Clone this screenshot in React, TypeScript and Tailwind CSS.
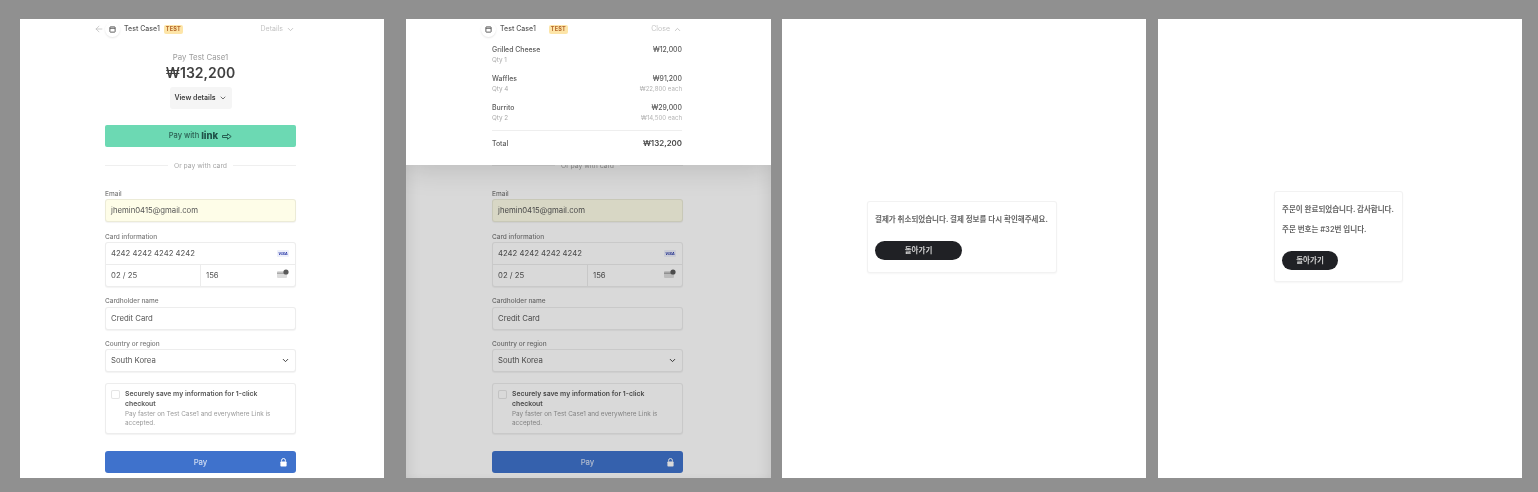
import React from "react";
import { ArrowLeft, ChevronDown, ChevronUp } from "lucide-react";

const font = { fontFamily: '"Inter", "Noto Sans CJK KR", sans-serif' };

function Shop() {
  return (
    <div className="w-[15px] h-[15px] rounded-full bg-white shadow-[0_1px_2px_rgba(0,0,0,0.1)] flex items-center justify-center">
      <svg width="7" height="7" viewBox="0 0 8 8" fill="none">
        <rect x="1" y="1" width="6" height="6" rx="0.6" stroke="#4b4b4b" strokeWidth="1" />
        <path d="M1 2.6H7" stroke="#4b4b4b" strokeWidth="1" />
      </svg>
    </div>
  );
}

function Badge() {
  return (
    <span className="w-[19px] h-[9px] rounded-[2px] bg-[#fde5a8] text-[#b4662a] text-[5.5px] font-bold flex items-center justify-center tracking-[0.2px]">
      TEST
    </span>
  );
}

function Label({ children, top }: { children: React.ReactNode; top: string }) {
  return <div className={`${top} h-[9px] text-[6.5px] leading-[10px] font-medium text-[#7a7a7a]`}>{children}</div>;
}

function Input({ value, bg = "bg-white", children }: { value: string; bg?: string; children?: React.ReactNode }) {
  return (
    <div className={`mt-[1px] h-[23px] rounded-[3px] ${bg} border border-black/[0.07] shadow-[0_1px_1px_rgba(0,0,0,0.05)] px-[5px] flex items-center justify-between text-[7.75px] text-[#555555]`}>
      <span>{value}</span>
      {children}
    </div>
  );
}

function Form() {
  return (
    <div className="w-[191px] flex flex-col shrink-0">
      <div className="flex flex-col items-center mt-[33px]">
        <div className="h-[10px] text-[7.8px] leading-[10px] text-[#9a9a9a]">Pay Test Case1</div>
        <div className="mt-[1px] h-[19px] text-[14px] leading-[19px] font-semibold text-[#404040]">₩132,200</div>
        <div className="mt-[5px] w-[62px] h-[22px] rounded-[3px] bg-[#f5f5f5] flex items-center justify-center gap-[3px] text-[7px] font-semibold text-[#404040]">
          View details
          <ChevronDown size={8} strokeWidth={2.2} />
        </div>
      </div>
      <div className="mt-[16px] h-[22px] rounded-[2px] bg-[#6cd9b3] flex items-center justify-center gap-[2px] text-[7.5px] text-[#2c5f53]">
        <span className="font-medium">Pay with</span>
        <span className="font-extrabold text-[9.5px] leading-[10px] text-[#1f5248]">link</span>
        <svg width="10" height="7" viewBox="0 0 10 7" fill="none" className="ml-[2px]">
          <path d="M0.5 2.5H5.5V0.8L9.2 3.5L5.5 6.2V4.5H0.5Z" stroke="#1f5248" strokeWidth="0.9" strokeLinejoin="round" />
        </svg>
      </div>
      <div className="mt-[13px] h-[10px] flex items-center gap-[6px] text-[6.8px] leading-[12px] text-[#a5a5a5]">
        <div className="flex-1 h-px bg-[#efefef]" />
        <span className="translate-y-[1px]">Or pay with card</span>
        <div className="flex-1 h-px bg-[#efefef]" />
      </div>
      <Label top="mt-[19px]">Email</Label>
      <Input value="jhemin0415@gmail.com" bg="bg-[#fefde8]" />
      <Label top="mt-[10px]">Card information</Label>
      <div className="mt-[1px] h-[45px] rounded-[3px] bg-white border border-black/[0.07] shadow-[0_1px_1px_rgba(0,0,0,0.05)] flex flex-col text-[7.75px] text-[#555555]">
        <div className="h-[22px] border-b border-[#ececec] pl-[5px] pr-[6px] flex items-center justify-between">
          <span>4242 4242 4242 4242</span>
          <span className="w-[12px] h-[7px] rounded-[1px] bg-[#eef0fb] text-[#2a3aa8] text-[4px] font-bold italic flex items-center justify-center">VISA</span>
        </div>
        <div className="flex-1 flex">
          <div className="w-[95px] border-r border-[#ececec] px-[5px] flex items-center">02 / 25</div>
          <div className="flex-1 pl-[5px] pr-[6px] flex items-center justify-between">
            <span>156</span>
            <svg width="12" height="9" viewBox="0 0 12 9" className="mb-[4px]">
              <rect x="0" y="2" width="10" height="7" rx="1" fill="#dcdcdc" />
              <rect x="0" y="3.5" width="10" height="1.4" fill="#a5a5a5" />
              <circle cx="9" cy="3" r="2.6" fill="#5a5a5a" />
            </svg>
          </div>
        </div>
      </div>
      <Label top="mt-[9px]">Cardholder name</Label>
      <div className="mt-[1px]"><Input value="Credit Card" /></div>
      <Label top="mt-[9px]">Country or region</Label>
      <Input value="South Korea">
        <ChevronDown size={9} strokeWidth={2.6} className="text-[#3c3c3c]" />
      </Input>
      <div className="mt-[11px] h-[51px] rounded-[3px] bg-white border border-black/[0.07] shadow-[0_1px_1px_rgba(0,0,0,0.05)] pl-[5px] pr-[8px] pt-[5px] flex gap-[5px]">
        <div className="w-[9px] h-[9px] mt-[1px] rounded-[2px] bg-white border border-black/10 shrink-0" />
        <div className="flex flex-col">
          <div className="text-[6.85px] leading-[9.5px] font-semibold text-[#555555]">Securely save my information for 1-click checkout</div>
          <div className="mt-[2px] text-[6.4px] leading-[9px] text-[#9a9a9a]">Pay faster on Test Case1 and everywhere Link is accepted.</div>
        </div>
      </div>
      <div className="mt-[17px] h-[22px] rounded-[3px] bg-[#3f72cc] text-white/75 text-[7.75px] leading-[24px] font-medium flex items-center justify-center relative">
        Pay
        <svg width="7" height="9" viewBox="0 0 7 9" className="absolute right-[9px]">
          <path d="M1.6 3.6V2.4A1.9 1.9 0 0 1 5.4 2.4V3.6" fill="none" stroke="white" strokeWidth="1" />
          <rect x="0.4" y="3.5" width="6.2" height="5" rx="0.8" fill="white" />
        </svg>
      </div>
    </div>
  );
}

function Row({ name, qty, price, each }: { name: string; qty: string; price: string; each?: string }) {
  return (
    <div className="h-[29px] flex justify-between">
      <div className="flex flex-col">
        <span className="h-[11px] text-[6.9px] leading-[11px] font-medium text-[#5a5a5a]">{name}</span>
        <span className="h-[10px] text-[6.3px] leading-[10px] text-[#a8a8a8]">{qty}</span>
      </div>
      <div className="flex flex-col items-end">
        <span className="h-[11px] text-[6.9px] leading-[11px] font-medium text-[#5a5a5a]">{price}</span>
        <span className="h-[10px] text-[6.1px] leading-[10px] text-[#b4b4b4]">{each}</span>
      </div>
    </div>
  );
}

function Back({ width }: { width: string }) {
  return (
    <button className={`${width} h-[19px] rounded-full bg-[#202125] text-[#cfcfcf] text-[7.5px] font-semibold flex items-center justify-center`}>
      돌아가기
    </button>
  );
}

export default function App() {
  return (
    <div style={font} className="w-[1538px] h-[492px] bg-[#909090] flex items-start overflow-hidden pt-[19px] pl-[20px]">
      <div className="w-[364px] h-[459px] bg-white pl-[85px] relative overflow-hidden blur-[0.5px]">
        <div className="absolute left-[74px] top-[2px] w-[201px] h-[16px] flex items-center text-[7px] font-medium text-[#5a5a5a]">
          <ArrowLeft size={10} className="text-[#b5b5b5]" strokeWidth={1.6} />
          <div className="ml-[1px]"><Shop /></div>
          <span className="ml-[4px]">Test Case1</span>
          <div className="ml-[4px]"><Badge /></div>
          <span className="ml-auto font-normal text-[#c4c4c4]">Details</span>
          <ChevronDown size={9} className="ml-[3px] text-[#b5b5b5]" />
        </div>
        <Form />
      </div>

      <div className="ml-[22px] w-[365px] h-[459px] bg-white pl-[86px] relative overflow-hidden blur-[0.5px]">
        <Form />
        <div className="absolute inset-0 bg-black/15 shadow-[inset_10px_0_14px_-8px_rgba(0,0,0,0.1),inset_-10px_0_14px_-8px_rgba(0,0,0,0.1)]" />
        <div className="absolute left-0 right-0 top-0 h-[146px] bg-white shadow-[0_0_30px_rgba(0,0,0,0.18)] pl-[86px] pr-[89px]">
          <div className="relative h-[20px] flex items-center text-[7px] font-medium text-[#5a5a5a]">
            <div className="absolute left-[-11px]"><Shop /></div>
            <span className="ml-[8px]">Test Case1</span>
            <div className="ml-[13px]"><Badge /></div>
            <span className="ml-auto font-normal text-[#c4c4c4]">Close</span>
            <ChevronUp size={9} className="ml-[3px] text-[#b5b5b5]" />
          </div>
          <div className="mt-[5px]">
            <Row name="Grilled Cheese" qty="Qty 1" price="₩12,000" />
            <Row name="Waffles" qty="Qty 4" price="₩91,200" each="₩22,800 each" />
            <Row name="Burrito" qty="Qty 2" price="₩29,000" each="₩14,500 each" />
          </div>
          <div className="h-px bg-[#eeeeee] mt-[-1px]" />
          <div className="mt-[7px] h-[12px] flex justify-between items-center">
            <span className="text-[6.9px] font-medium text-[#5a5a5a]">Total</span>
            <span className="text-[7.9px] font-semibold text-[#4a4a4a]">₩132,200</span>
          </div>
        </div>
      </div>

      <div className="ml-[11px] w-[364px] h-[459px] bg-white pl-[85px] pt-[182px] blur-[0.5px]">
        <div className="w-[190px] h-[72px] rounded-[3px] bg-white border border-black/5 shadow-[0_1px_2px_rgba(0,0,0,0.04)] px-[7px] pt-[12px]">
          <p className="h-[11px] text-[7.5px] leading-[11px] font-semibold text-[#666666] whitespace-nowrap">결제가 취소되었습니다. 결제 정보를 다시 확인해주세요.</p>
          <div className="mt-[16px]"><Back width="w-[87px]" /></div>
        </div>
      </div>

      <div className="ml-[12px] w-[364px] h-[459px] bg-white pl-[116px] pt-[172px] blur-[0.5px]">
        <div className="w-[129px] h-[91px] rounded-[3px] bg-white border border-black/5 shadow-[0_1px_2px_rgba(0,0,0,0.04)] px-[7px] pt-[12px]">
          <p className="h-[11px] text-[7.5px] leading-[11px] font-semibold text-[#666666] whitespace-nowrap">주문이 완료되었습니다. 감사합니다.</p>
          <p className="mt-[9px] h-[11px] text-[7.5px] leading-[11px] font-semibold text-[#666666] whitespace-nowrap">주문 번호는 #32번 입니다.</p>
          <div className="mt-[16px]"><Back width="w-[56px]" /></div>
        </div>
      </div>
    </div>
  );
}
